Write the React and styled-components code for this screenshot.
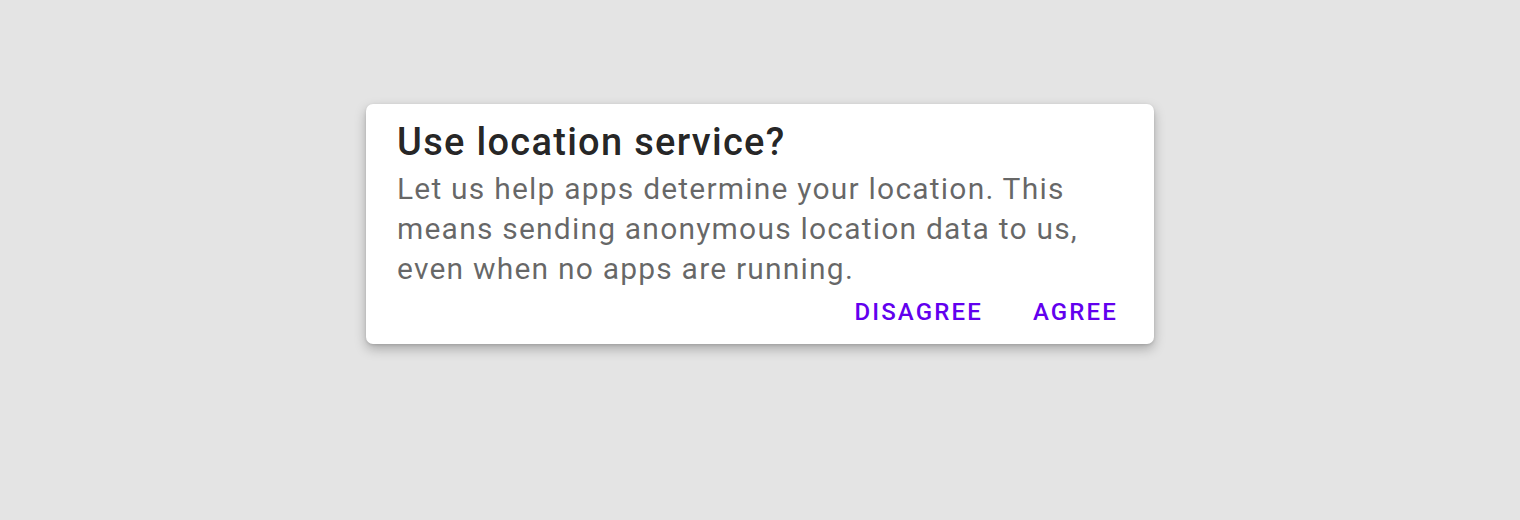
import React from "react";
import styled, { createGlobalStyle } from "styled-components";

const Global = createGlobalStyle`
  html, body { margin: 0; padding: 0; background: #e4e4e4; }
  body { font-family: Roboto, "Liberation Sans", sans-serif; }
`;

const Page = styled.div`
  width: 1520px;
  height: 520px;
  display: flex;
  justify-content: center;
  align-items: flex-start;
  padding-top: 104px;
  box-sizing: border-box;
`;

const Dialog = styled.div`
  width: 788px;
  height: 240px;
  box-sizing: border-box;
  background: #fff;
  border-radius: 7px;
  box-shadow: 0 5px 12px rgba(0,0,0,0.26), 0 1px 3px rgba(0,0,0,0.12);
  padding: 15px 31px 0 31px;
  display: flex;
  flex-direction: column;
`;

const Title = styled.h2`
  margin: 0;
  font-size: 38px;
  font-weight: 500;
  letter-spacing: 1.3px;
  line-height: 46px;
  color: rgba(0,0,0,0.87);
`;

const Body = styled.p`
  margin: 4px 0 0;
  font-size: 30px;
  letter-spacing: 1.2px;
  line-height: 40px;
  color: rgba(0,0,0,0.6);
`;

const Actions = styled.div`
  display: flex;
  justify-content: flex-end;
  gap: 50px;
  padding-right: 5px;
  margin-top: 8px;
`;

const Button = styled.button`
  border: none;
  background: none;
  padding: 0;
  font-family: Roboto, "Liberation Sans", sans-serif;
  font-size: 24px;
  font-weight: 500;
  letter-spacing: 2.15px;
  text-transform: uppercase;
  color: #6200ee;
  line-height: 30px;
  cursor: pointer;
`;

export default function App() {
  return (
    <>
      <Global />
      <Page>
        <Dialog>
          <Title>Use location service?</Title>
          <Body>
            Let us help apps determine your location. This means sending anonymous location data to us, even when no apps are running.
          </Body>
          <Actions>
            <Button>Disagree</Button>
            <Button>Agree</Button>
          </Actions>
        </Dialog>
      </Page>
    </>
  );
}
